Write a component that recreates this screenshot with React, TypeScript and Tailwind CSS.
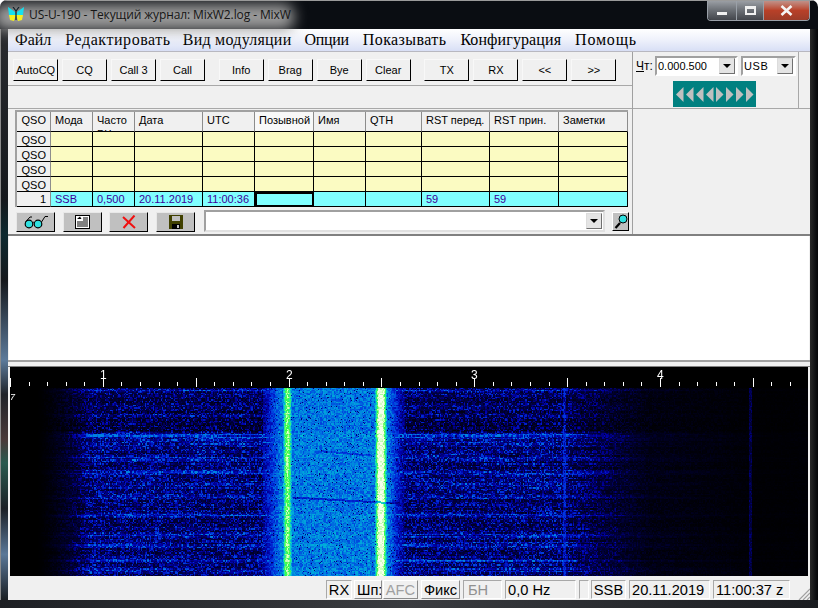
import { useEffect, useRef } from "react"

const TOP_BTNS = [
  ["AutoCQ", "CQ", "Call 3", "Call"],
  ["Info", "Brag", "Bye", "Clear"],
  ["TX", "RX", "<<", ">>"],
]

const HEADERS = ["QSO", "Мода", "Часто РЧ", "Дата", "UTC", "Позывной", "Имя", "QTH", "RST перед.", "RST прин.", "Заметки"]
const LAST_ROW = ["SSB", "0,500", "20.11.2019", "11:00:36", "", "", "", "59", "59", ""]

const BANDS: [number, number, number][] = [
  [390, 1.2, 0.8], [415, 2, 0.35], [425, 5, -0.35], [435, 2, 1.1], [441, 4, 0.45], [457, 3, 0.6], [472, 1.5, 0.9],
  [482, 3, 0.3], [497, 1.5, 0.55], [515, 1.5, 0.95], [524, 3, -0.15], [535, 1.5, 0.7], [545, 2, 0.8], [560, 1, 0.95], [570, 2, 0.6],
]

function mulberry(seed: number) {
  return () => {
    seed |= 0
    seed = (seed + 0x6d2b79f5) | 0
    let t = Math.imul(seed ^ (seed >>> 15), 1 | seed)
    t = (t + Math.imul(t ^ (t >>> 7), 61 | t)) ^ t
    return ((t ^ (t >>> 14)) >>> 0) / 4294967296
  }
}

const STOPS: [number, number, number, number][] = [
  [0, 0, 0, 0], [0.18, 0, 0, 70], [0.32, 0, 0, 170], [0.45, 0, 50, 220], [0.57, 0, 125, 225],
  [0.68, 0, 190, 215], [0.77, 50, 235, 160], [0.85, 50, 255, 60], [0.93, 190, 255, 170], [1, 245, 255, 235],
]

function palette(v: number): [number, number, number] {
  v = Math.max(0, Math.min(1, v))
  for (let i = 1; i < STOPS.length; i++) {
    if (v <= STOPS[i][0]) {
      const a = STOPS[i - 1]
      const b = STOPS[i]
      const t = (v - a[0]) / (b[0] - a[0])
      return [a[1] + (b[1] - a[1]) * t, a[2] + (b[2] - a[2]) * t, a[3] + (b[3] - a[3]) * t]
    }
  }
  return [255, 255, 255]
}

const gauss = (x: number, c: number, w: number) => Math.exp(-((x - c) * (x - c)) / (2 * w * w))

// level of the two tones and the passband between them
function signal(x: number) {
  let s = 0
  if (x > 262 && x < 405) {
    s = 0.56
    if (x < 280) s = 0.3 + ((x - 262) / 18) * 0.26
    if (x > 388) s = 0.56 - ((x - 388) / 17) * 0.31
  }
  s = Math.max(s, 0.9 * gauss(x, 287, 4.8))
  s = Math.max(s, Math.min(1, 1.08 * gauss(x, 380.5, 5.6)))
  return s
}

function falloff(x: number) {
  if (x < 36) return 0
  if (x < 90) return Math.pow((x - 36) / 54, 1.6)
  if (x < 560) return 1
  if (x < 650) return 1 - ((x - 560) / 90) * 0.8
  if (x < 760) return 0.2 - ((x - 650) / 110) * 0.15
  return 0.04
}

function Waterfall() {
  const ref = useRef<HTMLCanvasElement>(null)
  useEffect(() => {
    const c = ref.current
    if (!c) return
    const ctx = c.getContext("2d")
    if (!ctx) return
    const W = 798
    const H = 209
    const img = ctx.createImageData(W, H)
    const rnd = mulberry(7)
    const cols = Math.ceil(W / 1.33) + 1
    const rows = Math.ceil(H / 1.33) + 1
    const noise = new Float32Array(cols * rows).map(() => rnd())
    const streak = new Float32Array(cols * rows)
    const rowOff = new Float32Array(rows).map(() => (rnd() - 0.5) * 0.09)
    for (let r = 0; r < rows; r++) {
      let s = rnd()
      for (let k = 0; k < cols; k++) {
        s += (rnd() - 0.5) * 0.35
        s = Math.max(0, Math.min(1, s))
        streak[r * cols + k] = s
      }
    }
    for (let py = 0; py < H; py++) {
      const y = py + 367
      const ry = Math.floor(py / 1.33)
      let gain = 0
      for (const b of BANDS) gain += b[2] * gauss(y, b[0], b[1])
      if (y < 432) gain -= 0.22
      for (let px = 0; px < W; px++) {
        const x = px + 10
        const i = (py * W + px) * 4
        img.data[i + 3] = 255
        if (y < 388) continue
        const rx = Math.floor(px / 1.33)
        const n = noise[ry * cols + rx]
        const st = streak[ry * cols + rx]
        const f = falloff(x)
        let dim = f * (0.08 + 0.34 * n * n + 0.09 * st + rowOff[ry] + gain * (0.08 + 0.16 * st))
        dim = Math.min(dim, 0.58)
        if (Math.abs(x - 564) < 1.6) dim = Math.min(0.46, dim + 0.14 + 0.08 * n)
        if (Math.abs(x - 750) < 1.4) dim += 0.1 + 0.12 * n
        if (Math.abs(x - 615) < 0.8 && y > 440) dim += 0.08 * n
        const sig = signal(x)
        let v = dim
        if (sig > 0.05) {
          const jitter = (n - 0.5) * 0.17
          v = Math.max(dim, sig + jitter + gain * 0.02)
          if (sig < 0.7 && rnd() < 0.03) v *= 0.45
          // dark drifting traces inside the passband
          const d1 = 497 + (x - 290) * 0.055
          const d2 = 449 + (x - 300) * 0.085
          if (x > 292 && x < 400 && Math.abs(y - d1) < 1) v *= 0.72
          if (x > 320 && x < 372 && Math.abs(y - d2) < 1) v *= 0.82
        }
        const [r, g, b] = palette(v)
        img.data[i] = r
        img.data[i + 1] = g
        img.data[i + 2] = b
      }
    }
    ctx.putImageData(img, 0, 0)
    // ruler ticks
    ctx.fillStyle = "#fff"
    for (let k = 0; k < 43; k++) {
      const tx = Math.round(k * 18.57)
      const major = k % 5 === 0
      ctx.fillRect(tx, major ? 11 : 15, 1, major ? 9 : 4)
    }
  }, [])
  return (
    <div className="relative mx-[2px] h-[209px] bg-black">
      <canvas ref={ref} width={798} height={209} className="block" />
      {[["1", 93], ["2", 279], ["3", 464], ["4", 650]].map(([t, left]) => (
        <span key={t} className="absolute top-[1px] text-[12px] leading-[14px] text-white" style={{ left: Number(left) - 3 }}>
          {t}
        </span>
      ))}
      <span className="absolute left-0 top-[25px] text-[9px] italic leading-[10px] text-white">7</span>
    </div>
  )
}

function Butterfly() {
  return (
    <svg width="17" height="15" viewBox="0 0 17 15" className="shrink-0">
      <path d="M0 0 L7 5 L8 8 L1 8 Z" fill="#16e0f0" />
      <path d="M16 0 L9 5 L8 8 L15 8 Z" fill="#16e0f0" />
      <path d="M1 8 L8 8 L6 14 L2 13 Z" fill="#f5f020" />
      <path d="M15 8 L8 8 L10 14 L14 13 Z" fill="#f5f020" />
      <path d="M8 3 V13 M5 0 L8 4 M11 0 L8 4" stroke="#10202a" strokeWidth="1.2" fill="none" />
    </svg>
  )
}

function DropBtn() {
  return (
    <span className="flex h-[16px] w-[16px] shrink-0 items-center justify-center border border-[#dcdcdc] border-b-[#707070] border-r-[#707070] bg-[#e4e4e4]">
      <svg width="8" height="4" viewBox="0 0 8 4">
        <path d="M0 0 H8 L4 4 Z" fill="#000" />
      </svg>
    </span>
  )
}

function Combo({ text, cls }: { text: string; cls: string }) {
  return (
    <div className={`flex h-[20px] items-center justify-between border-2 border-[#a0a0a0] border-b-white border-r-white bg-white pr-[1px] text-[11px] ${cls}`}>
      <span className="pl-[1px]">{text}</span>
      <DropBtn />
    </div>
  )
}

function IconBtn({ children, ml }: { children: React.ReactNode; ml: string }) {
  return (
    <button className={`flex h-[20px] w-[39px] items-center justify-center border border-[#e8e8e8] border-b-black border-r-black bg-[#c0c0c0] ${ml}`}>
      {children}
    </button>
  )
}

function Tris() {
  const left = [0, 10, 20, 30]
  const right = [40, 50, 60, 70]
  return (
    <svg width="78" height="15" viewBox="0 0 78 15">
      {left.map((x) => (
        <polygon key={x} points={`${x},7.5 ${x + 7.5},0 ${x + 7.5},15`} fill="#c0c0c0" />
      ))}
      {right.map((x) => (
        <polygon key={x} points={`${x},0 ${x + 7.5},7.5 ${x},15`} fill="#c0c0c0" />
      ))}
    </svg>
  )
}

const SUNK = "border border-[#a8a8a8] border-b-white border-r-white"
const RAISED = "border border-white border-b-[#8c8c8c] border-r-[#8c8c8c]"

export default function App() {
  return (
    <div className="relative flex h-[608px] w-[818px] flex-col overflow-hidden rounded-t-[7px] bg-[#0a0d12] [font-family:'Liberation_Sans',Arial,sans-serif]">
      {/* Title bar */}
      <div className="relative flex h-[29px] shrink-0 items-center border-t border-[#9a9a9a] pl-[8px]">
        <div className="absolute left-[-6px] top-[3px] h-[26px] w-[300px] rounded-[10px] bg-[#9c9c9c] blur-[7px]" />
        <div className="relative flex items-center gap-[4px] pb-[1px]">
          <Butterfly />
          <span className="text-[12px] text-[#151515] [font-family:'Open_Sans',sans-serif] tracking-[-0.1px]">
            US-U-190 - Текущий журнал: MixW2.log - MixW
          </span>
        </div>
        <div className="absolute right-[8px] top-0 flex h-[20px] overflow-hidden rounded-b-[4px] border border-t-0 border-[#9aa0a8]">
          <div className="flex w-[29px] items-end justify-center border-r border-[#9aa0a8] bg-gradient-to-b from-[#9a9ea4] via-[#6a6e74] to-[#43464c] pb-[5px]">
            <span className="h-[3px] w-[10px] bg-[#f0f0f0]" />
          </div>
          <div className="flex w-[27px] items-center justify-center border-r border-[#9aa0a8] bg-gradient-to-b from-[#9a9ea4] via-[#6a6e74] to-[#43464c]">
            <span className="h-[9px] w-[11px] border-2 border-t-[3px] border-[#f0f0f0]" />
          </div>
          <div className="flex w-[45px] items-center justify-center bg-gradient-to-b from-[#c09088] via-[#b84028] to-[#9c3c28]">
            <svg width="13" height="11" viewBox="0 0 13 11">
              <path d="M1.5 1 L11.5 10 M11.5 1 L1.5 10" stroke="#f4f4f4" strokeWidth="2.6" />
            </svg>
          </div>
        </div>
      </div>

      <div className="flex min-h-0 flex-1">
        <div className="w-[8px] shrink-0 bg-[linear-gradient(to_bottom,#2a2c30_0%,#15181c_30%,#0e2a30_36%,#15181c_44%,#5c7a9a_58%,#20242a_64%,#4a3a3a_72%,#2a5a50_76%,#1c2026_84%,#5a7898_92%,#1a1e22_100%)] border-l border-[#8a8a8a]" />

        {/* Client area */}
        <div className="flex w-[802px] shrink-0 flex-col bg-[#f0f0f0]">
          <div className="flex h-[23px] shrink-0 items-center whitespace-nowrap border-b border-[#b8b8c0] bg-gradient-to-b from-white via-[#eef1fb] to-[#d8dff5] pl-[7px] pb-[1px] text-[16px] text-black [font-family:'Liberation_Serif',serif]">
            <span>Файл</span>
            <span className="ml-[14px] tracking-[0.55px]">Редактировать</span>
            <span className="ml-[12px] tracking-[0.25px]">Вид модуляции</span>
            <span className="ml-[13px] tracking-[-0.3px]">Опции</span>
            <span className="ml-[14px] tracking-[0.4px]">Показывать</span>
            <span className="ml-[14px] tracking-[0.1px]">Конфигурация</span>
            <span className="ml-[14px] tracking-[0.8px]">Помощь</span>
          </div>

          <div className="flex h-[184px] shrink-0 border-b-2 border-[#808080]">
            <div className="flex w-[625px] shrink-0 flex-col border-r border-[#a0a0a0]">
              <div className="flex h-[34px] shrink-0 border-b border-[#a8a8a8] pl-[5px] pt-[7px]">
                {TOP_BTNS.map((g, i) => (
                  <div key={i} className={`flex gap-[3.8px] ${i === 0 ? "" : "ml-[13.5px]"}`}>
                    {g.map((t) => (
                      <button
                        key={t}
                        className="h-[22px] w-[45.2px] border border-[#f8f8f8] border-b-black border-r-black bg-[#f0f0f0] text-[11px] leading-[18px] text-black"
                      >
                        {t}
                      </button>
                    ))}
                  </div>
                ))}
              </div>
              <div className="h-[23px] shrink-0 border-b border-[#a8a8a8]" />

              {/* Log grid */}
              <div className="ml-[7px] mt-[1px] w-[613px] border-l-2 border-t-2 border-[#a0a0a0]">
                <div className="grid grid-cols-[34px_42px_42px_68px_52px_59px_52px_56px_68px_69px_69px] grid-rows-[20px_15px_15px_15px_15px_15px] text-[11px] text-black">
                  {HEADERS.map((h, i) => (
                    <div
                      key={h}
                      className={`overflow-hidden border-b border-r border-b-black border-r-[#8c8c8c] pt-[1px] leading-[14px] ${i === 0 ? "pr-[4px] text-right" : "pl-[4px]"} ${i === 5 ? "whitespace-nowrap bg-[#f8f8f8]" : "bg-[#f0f0f0]"} ${i === 2 ? "break-words" : ""}`}
                    >
                      {h}
                    </div>
                  ))}
                  {[0, 1, 2, 3].map((r) => (
                    <>
                      <div key={`q${r}`} className="border-b border-r border-b-black border-r-[#8c8c8c] bg-[#f0f0f0] pr-[4px] pt-[1px] text-right leading-[14px]">
                        QSO
                      </div>
                      {LAST_ROW.map((_, c) => (
                        <div key={`${r}-${c}`} className="border-b border-r border-black bg-[#fbfbc2]" />
                      ))}
                    </>
                  ))}
                  <div className="border-b border-r border-b-black border-r-[#8c8c8c] bg-[#f0f0f0] pr-[4px] text-right leading-[14px]">1</div>
                  {LAST_ROW.map((t, c) => (
                    <div
                      key={c}
                      className={`bg-[#80ffff] pl-[4px] leading-[14px] text-[#3c0098] ${c === 4 ? "border-2 border-black" : "border-b border-r border-black"}`}
                    >
                      {t}
                    </div>
                  ))}
                </div>
              </div>

              <div className="ml-[8px] mt-[5px] flex items-start">
                <IconBtn ml="">
                  <svg width="26" height="14" viewBox="0 0 26 14">
                    <circle cx="6" cy="9" r="3.8" fill="#30e0e0" stroke="#000" strokeWidth="1.2" />
                    <circle cx="15" cy="9" r="3.8" fill="#30e0e0" stroke="#000" strokeWidth="1.2" />
                    <path d="M9.5 8 Q10.5 6.5 11.5 8 M2.5 7 L7 2 L9 2 M18.5 7 L22 1.5 L25 1.5" stroke="#000" strokeWidth="1" fill="none" />
                  </svg>
                </IconBtn>
                <IconBtn ml="ml-[8px]">
                  <svg width="15" height="14" viewBox="0 0 15 14">
                    <rect x="0.5" y="0.5" width="14" height="13" fill="#fff" stroke="#000" />
                    <path d="M2 4 L5 1.5 L6.5 4 Z" fill="#000" />
                    <path d="M8 3 H13 M8 5 H13 M2 7 H13 M2 9 H13 M2 11 H13" stroke="#000" />
                  </svg>
                </IconBtn>
                <IconBtn ml="ml-[7px]">
                  <svg width="14" height="14" viewBox="0 0 14 14">
                    <path d="M1 2 L13 13 M12.5 0.5 L1.5 13" stroke="#f01010" strokeWidth="2" />
                  </svg>
                </IconBtn>
                <IconBtn ml="ml-[8px]">
                  <svg width="14" height="14" viewBox="0 0 14 14">
                    <rect width="14" height="14" fill="#404000" />
                    <rect x="3" y="1" width="8" height="5" fill="#c0c0c0" />
                    <rect x="3" y="9" width="8" height="5" fill="#000" />
                    <rect x="8" y="10" width="2" height="3" fill="#c0c0c0" />
                  </svg>
                </IconBtn>
                <div className="ml-[9px] mt-[-2px] flex h-[22px] w-[401px] items-center justify-end border-2 border-[#a0a0a0] border-b-[#e0e0e0] border-r-[#e0e0e0] bg-white pr-[1px]">
                  <DropBtn />
                </div>
                <button className="ml-[7px] flex h-[19px] w-[17px] items-center justify-center border border-white border-b-black border-r-black bg-[#c0c0c0]">
                  <svg width="14" height="15" viewBox="0 0 14 15">
                    <path d="M6 9 L1.5 14" stroke="#000" strokeWidth="2.2" />
                    <circle cx="9" cy="5" r="4" fill="#30e0e0" stroke="#000" />
                  </svg>
                </button>
              </div>
            </div>

            <div className="flex min-w-0 flex-1 flex-col">
              <div className="h-[56px] w-[166px] shrink-0 border-r border-[#a8a8a8] pt-[4px]">
                <div className="flex items-center">
                  <span className="ml-[3px] w-[18px] text-[12px] leading-[14px] text-black">
                    <span className="underline">Ч</span>т:
                  </span>
                  <Combo text="0.000.500" cls="w-[83px] ml-[1px]" />
                  <Combo text="USB" cls="ml-[3px] w-[55px] tracking-[0.6px]" />
                </div>
                <div className="ml-[40px] mt-[5px] flex h-[26px] w-[83px] items-center justify-center bg-[#008080]">
                  <Tris />
                </div>
              </div>
              <div className="h-[1px] w-full bg-[#a8a8a8]" />
            </div>
          </div>

          <div className="mx-[1px] h-[124px] shrink-0 bg-white" />

          <div className="h-[7px] shrink-0 border-b border-t-2 border-b-[#808080] border-t-[#a0a0a0] bg-[#f0f0f0]" />

          <Waterfall />

          {/* Status bar */}
          <div className="flex h-[24px] shrink-0 items-start pl-[318px] pt-[4px] text-[14.67px] leading-[18px] text-black">
            <div className={`flex h-[19px] w-[26px] items-center justify-center ${SUNK}`}>RX</div>
            <div className={`ml-[2px] flex h-[19px] w-[28px] items-center overflow-hidden whitespace-nowrap pl-[2px] ${RAISED}`}>Шп:</div>
            <div className={`ml-[1px] flex h-[19px] w-[35px] items-center justify-center text-[#a0a0a0] ${RAISED}`}>AFC</div>
            <div className={`ml-[3px] flex h-[19px] w-[39px] items-center justify-center ${RAISED}`}>Фикс</div>
            <div className={`ml-[3px] flex h-[19px] w-[39px] items-center pl-[4px] text-[#909090] ${SUNK}`}>БН</div>
            <div className={`ml-[3px] flex h-[19px] w-[71px] items-center pl-[2px] ${SUNK}`}>0,0 Hz</div>
            <div className={`ml-[3px] h-[19px] w-[10px] ${SUNK}`} />
            <div className={`ml-[2px] flex h-[19px] w-[35px] items-center justify-center ${SUNK}`}>SSB</div>
            <div className={`ml-[3px] flex h-[19px] w-[81px] items-center pl-[2px] ${SUNK}`}>20.11.2019</div>
            <div className={`ml-[3px] flex h-[19px] w-[77px] items-center pl-[2px] ${SUNK}`}>11:00:37 z</div>
            <svg width="12" height="12" viewBox="0 0 12 12" className="ml-[8px] mt-[8px]">
              <path d="M12 1 L1 12 M12 5 L5 12 M12 9 L9 12" stroke="#a0a0a0" strokeWidth="1.2" />
            </svg>
          </div>
        </div>

        <div className="w-[8px] shrink-0 bg-gradient-to-r from-[#2a2a2a] to-[#050608]" />
      </div>

      <div className="h-[8px] shrink-0 bg-gradient-to-r from-[#1e2024] via-[#3a3c40] to-[#1a1c20]" />
    </div>
  )
}
